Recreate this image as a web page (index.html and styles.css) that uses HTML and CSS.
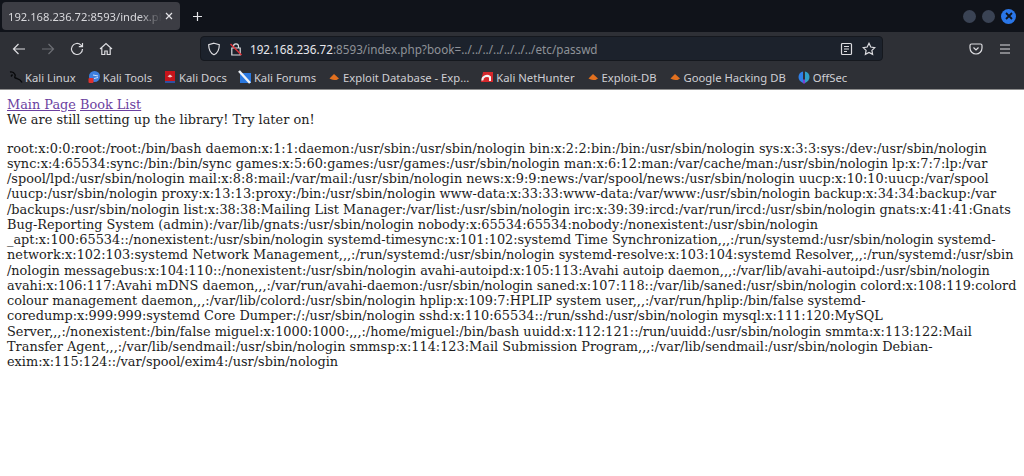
FILE: index.html
```html
<!DOCTYPE html>
<html>
  <head>
    <title>192.168.236.72:8593/index.php</title>
    <link rel="stylesheet" href="styles.css">
  </head>
  <body>
    <div class="browser">
      <div class="tabbar">
        <div class="tab">
          <span class="tab-title">192.168.236.72:8593/index.php?book=</span>
          <svg class="tab-close" width="8" height="8" viewBox="0 0 8 8"><path d="M1 1l6 6M7 1l-6 6"/></svg>
        </div>
        <svg class="new-tab" width="11" height="11" viewBox="0 0 11 11"><path d="M5.500 1v9M1 5.500h9"/></svg>
        <div class="win-buttons">
          <span class="win-btn"></span>
          <span class="win-btn"></span>
          <span class="win-btn close">
            <svg width="8" height="8" viewBox="0 0 8 8"><path d="M1 1l6 6M7 1l-6 6"/></svg>
          </span>
        </div>
      </div>
      <div class="navbar">
        <div class="nav-icons">
          <svg class="nav-icon" width="14" height="14" viewBox="0 0 14 14"><path d="M13 7H1.500M6.500 2L1.500 7l5 5"/></svg>
          <svg class="nav-icon dim" width="14" height="14" viewBox="0 0 14 14"><path d="M1 7h11.500M7.500 2l5 5-5 5"/></svg>
          <svg class="nav-icon" width="14" height="14" viewBox="0 0 14 14"><path d="M12.500 7a5.500 5.500 0 1 1-1.600-3.900L12.500 4.700M12.500 1v3.700H8.800"/></svg>
          <svg class="nav-icon" width="14" height="14" viewBox="0 0 14 14"><path d="M1 7l6-5.500L13 7M2.800 6v6.500h3V9h2.400v3.500h3V6"/></svg>
        </div>
        <div class="urlbar">
          <svg class="nav-icon shield" width="14" height="14" viewBox="0 0 14 14"><path d="M7 1.200l5.300 1.600c0 5-1.500 8.300-5.300 10-3.800-1.700-5.300-5-5.300-10z"/></svg>
          <svg class="lock" width="14" height="14" viewBox="0 0 14 14">
            <path class="lock-body" d="M4.500 6V4.300a2.500 2.500 0 0 1 5 0V6M2.800 6h8.400v7H2.800z"/>
            <path class="lock-slash" d="M1.500 2l11 11"/>
          </svg>
          <span class="url"><span class="host">192.168.236.72</span>:8593/index.php?book=../../../../../../../etc/passwd</span>
          <svg class="nav-icon reader" width="13" height="14" viewBox="0 0 13 14"><path d="M2.500 1.500h8a1 1 0 0 1 1 1v9a1 1 0 0 1-1 1h-8a1 1 0 0 1-1-1v-9a1 1 0 0 1 1-1zM4 4.500h5M4 7h5M4 9.500h3"/></svg>
          <svg class="nav-icon star" width="14" height="14" viewBox="0 0 14 14"><path d="M7 1.300l1.800 3.700 4 .6-2.900 2.800.7 4L7 10.500l-3.600 1.900.7-4L1.200 5.600l4-.6z"/></svg>
        </div>
        <div class="nav-right">
          <svg class="nav-icon" width="14" height="14" viewBox="0 0 14 14"><path d="M2.500 2h9A1.500 1.500 0 0 1 13 3.500V6a6 6 0 0 1-12 0V3.500A1.500 1.500 0 0 1 2.500 2zM4.500 5.500L7 8l2.500-2.500"/></svg>
          <svg class="nav-icon" width="14" height="14" viewBox="0 0 14 14"><path d="M2 3h10M2 7h10M2 11h10"/></svg>
        </div>
      </div>
      <div class="bookmarks">
        <a class="bm">
          <svg width="14" height="14" viewBox="0 0 14 14"><path class="fav-dragon" d="M1 2c2.500-.5 4 .5 5 2.500S4.500 7 6.500 8s4.500.5 6.500 4.500M3.500 4.500L2 6.500"/></svg>
          Kali Linux
        </a>
        <a class="bm">
          <svg width="14" height="14" viewBox="0 0 14 14"><circle cx="7.500" cy="6.500" r="5.500" fill="#3d7fe0"/><path d="M6 5l5 1M7 8.500l4-1" stroke="#cfe0fa" fill="none"/><rect x="1.500" y="8" width="5" height="5" rx="1" fill="#e0312e"/></svg>
          Kali Tools
        </a>
        <a class="bm">
          <svg width="14" height="14" viewBox="0 0 14 14"><rect x="2" y="1" width="10" height="12" fill="#c8141b"/><rect x="2" y="11" width="10" height="2" fill="#3050a0"/><path d="M4.500 6.500l2.500-2 2.500 2L7 7.500z" fill="#f2c8c8"/></svg>
          Kali Docs
        </a>
        <a class="bm">
          <svg width="14" height="14" viewBox="0 0 14 14"><rect x="2" y="3" width="11" height="10" fill="#2a78e0"/><path d="M1 1l11 12" stroke="#eef2f8" stroke-width="2.500"/></svg>
          Kali Forums
        </a>
        <a class="bm">
          <svg width="14" height="14" viewBox="0 0 14 14"><path d="M2.500 8.500L7 4l5 4.500-2.500 1.500c-2.500 0-5-.5-7-1.500z" fill="#e2701f"/></svg>
          Exploit Database - Exp...
        </a>
        <a class="bm">
          <svg width="14" height="14" viewBox="0 0 14 14"><path d="M3 2h10v10H1z" fill="#d5282c"/><path d="M2.500 10.500a4.500 4 0 0 1 7.500-3.500v4" stroke="#f4f4f4" stroke-width="2" fill="none"/></svg>
          Kali NetHunter
        </a>
        <a class="bm">
          <svg width="14" height="14" viewBox="0 0 14 14"><path d="M2.500 8.500L7 4l5 4.500-2.500 1.500c-2.500 0-5-.5-7-1.500z" fill="#e2701f"/></svg>
          Exploit-DB
        </a>
        <a class="bm">
          <svg width="14" height="14" viewBox="0 0 14 14"><path d="M2.500 8.500L7 4l5 4.500-2.500 1.500c-2.500 0-5-.5-7-1.500z" fill="#e2701f"/></svg>
          Google Hacking DB
        </a>
        <a class="bm">
          <svg width="14" height="14" viewBox="0 0 14 14"><path d="M6 1.500C3 2 1.500 4.500 1.500 7S3 11.500 6 13z" fill="#2f80e8"/><path d="M8 1.500c3 .5 4.500 3 4.500 5.500S11 11.500 8 13z" fill="#2fa0c8"/><path d="M6 9.500h2V13.500H6z" fill="#7a40d0"/></svg>
          OffSec
        </a>
      </div>
    </div>
    <main class="page">
      <div><a class="link" href="#">Main Page</a> <a class="link" href="#">Book List</a></div>
      <div>We are still setting up the library! Try later on!</div>
      <p class="passwd">root:x:0:0:root:/root:/bin/bash daemon:x:1:1:daemon:/usr/sbin:/usr/sbin/nologin bin:x:2:2:bin:/bin:/usr/sbin/nologin sys:x:3:3:sys:/dev:/usr/sbin/nologin<br>
sync:x:4:65534:sync:/bin:/bin/sync games:x:5:60:games:/usr/games:/usr/sbin/nologin man:x:6:12:man:/var/cache/man:/usr/sbin/nologin lp:x:7:7:lp:/var<br>
/spool/lpd:/usr/sbin/nologin mail:x:8:8:mail:/var/mail:/usr/sbin/nologin news:x:9:9:news:/var/spool/news:/usr/sbin/nologin uucp:x:10:10:uucp:/var/spool<br>
/uucp:/usr/sbin/nologin proxy:x:13:13:proxy:/bin:/usr/sbin/nologin www-data:x:33:33:www-data:/var/www:/usr/sbin/nologin backup:x:34:34:backup:/var<br>
/backups:/usr/sbin/nologin list:x:38:38:Mailing List Manager:/var/list:/usr/sbin/nologin irc:x:39:39:ircd:/var/run/ircd:/usr/sbin/nologin gnats:x:41:41:Gnats<br>
Bug-Reporting System (admin):/var/lib/gnats:/usr/sbin/nologin nobody:x:65534:65534:nobody:/nonexistent:/usr/sbin/nologin<br>
_apt:x:100:65534::/nonexistent:/usr/sbin/nologin systemd-timesync:x:101:102:systemd Time Synchronization,,,:/run/systemd:/usr/sbin/nologin systemd-<br>
network:x:102:103:systemd Network Management,,,:/run/systemd:/usr/sbin/nologin systemd-resolve:x:103:104:systemd Resolver,,,:/run/systemd:/usr/sbin<br>
/nologin messagebus:x:104:110::/nonexistent:/usr/sbin/nologin avahi-autoipd:x:105:113:Avahi autoip daemon,,,:/var/lib/avahi-autoipd:/usr/sbin/nologin<br>
avahi:x:106:117:Avahi mDNS daemon,,,:/var/run/avahi-daemon:/usr/sbin/nologin saned:x:107:118::/var/lib/saned:/usr/sbin/nologin colord:x:108:119:colord<br>
colour management daemon,,,:/var/lib/colord:/usr/sbin/nologin hplip:x:109:7:HPLIP system user,,,:/var/run/hplip:/bin/false systemd-<br>
coredump:x:999:999:systemd Core Dumper:/:/usr/sbin/nologin sshd:x:110:65534::/run/sshd:/usr/sbin/nologin mysql:x:111:120:MySQL<br>
Server,,,:/nonexistent:/bin/false miguel:x:1000:1000:,,,:/home/miguel:/bin/bash uuidd:x:112:121::/run/uuidd:/usr/sbin/nologin smmta:x:113:122:Mail<br>
Transfer Agent,,,:/var/lib/sendmail:/usr/sbin/nologin smmsp:x:114:123:Mail Submission Program,,,:/var/lib/sendmail:/usr/sbin/nologin Debian-<br>
exim:x:115:124::/var/spool/exim4:/usr/sbin/nologin</p>
    </main>
  </body>
</html>
```

FILE: styles.css
```css
/* browser chrome */
body {
  margin: 0;
  background-color: #fff;
}
.browser {
  font-family: "Noto Sans", sans-serif;
  color: #d8d8dc;
}
.tabbar {
  display: flex;
  align-items: center;
  height: 32px;
  background-color: #10131a;
}
.tab {
  display: flex;
  align-items: center;
  width: 178px;
  height: 28px;
  margin-left: 2px;
  padding-left: 6px;
  box-sizing: border-box;
  background-color: #3c3d44;
  border-radius: 4px;
  font-size: 11.200px;
}
.tab-title {
  width: 154px;
  overflow: hidden;
  white-space: nowrap;
  -webkit-mask-image: linear-gradient(to right, #000 85%, transparent);
}
.tab-close {
  margin-left: 3px;
}
.tab-close path,
.new-tab path {
  stroke: #e4e4e8;
  stroke-width: 1.2;
  fill: none;
}
.new-tab {
  margin-left: 12px;
}
.win-buttons {
  display: flex;
  align-items: center;
  gap: 6px;
  margin-left: auto;
  margin-right: 8px;
}
.win-btn {
  width: 13px;
  height: 13px;
  border-radius: 50%;
  background-color: #3a4354;
}
.win-btn.close {
  display: flex;
  align-items: center;
  justify-content: center;
  width: 15px;
  height: 15px;
  background-color: #2a76e8;
}
.win-btn.close path {
  stroke: #10131a;
  stroke-width: 1.8;
  fill: none;
}
.navbar {
  display: flex;
  align-items: center;
  height: 33px;
  background-color: #2e3036;
}
.nav-icon path {
  stroke: #dcdce0;
  stroke-width: 1.2;
  fill: none;
}
.nav-icon.dim path {
  stroke: #6c6e74;
}
.nav-icons {
  display: flex;
  gap: 15px;
  width: 200px;
  padding-left: 12px;
  box-sizing: border-box;
}
.urlbar {
  display: flex;
  align-items: center;
  width: 683px;
  height: 25px;
  box-sizing: border-box;
  padding: 0 6px;
  background-color: #1c222c;
  border: 1px solid #15181e;
  border-radius: 4px;
  font-size: 11.700px;
}
.lock {
  margin-left: 8px;
}
.lock-body {
  stroke: #dcdce0;
  stroke-width: 1.2;
  fill: none;
}
.lock-slash {
  stroke: #e0313a;
  stroke-width: 1.4;
}
.url {
  margin-left: 7px;
  color: #8f9298;
  white-space: nowrap;
}
.host {
  color: #e8e8ec;
}
.reader {
  margin-left: auto;
}
.star {
  margin-left: 9px;
}
.nav-right {
  display: flex;
  gap: 15px;
  margin-left: auto;
  margin-right: 12px;
}
.bookmarks {
  display: flex;
  align-items: center;
  gap: 11px;
  height: 24px;
  padding-left: 9px;
  background-color: #2e3036;
  border-bottom: 1px solid #8e8e8e;
  font-size: 11.250px;
  color: #cfcfd4;
}
.bm {
  display: flex;
  align-items: center;
  gap: 2px;
  white-space: nowrap;
}
.fav-dragon {
  stroke: #08090b;
  stroke-width: 1.4;
  fill: none;
}

/* page content */
.page {
  padding: 7px 7px;
  font-family: "DejaVu Serif", serif;
  font-size: 12.870px;
  line-height: 15.250px;
  color: #1c1c1c;
}
.link {
  color: #6b3fa0;
}
.passwd {
  margin: 13px 0 0;
  white-space: nowrap;
}
```
